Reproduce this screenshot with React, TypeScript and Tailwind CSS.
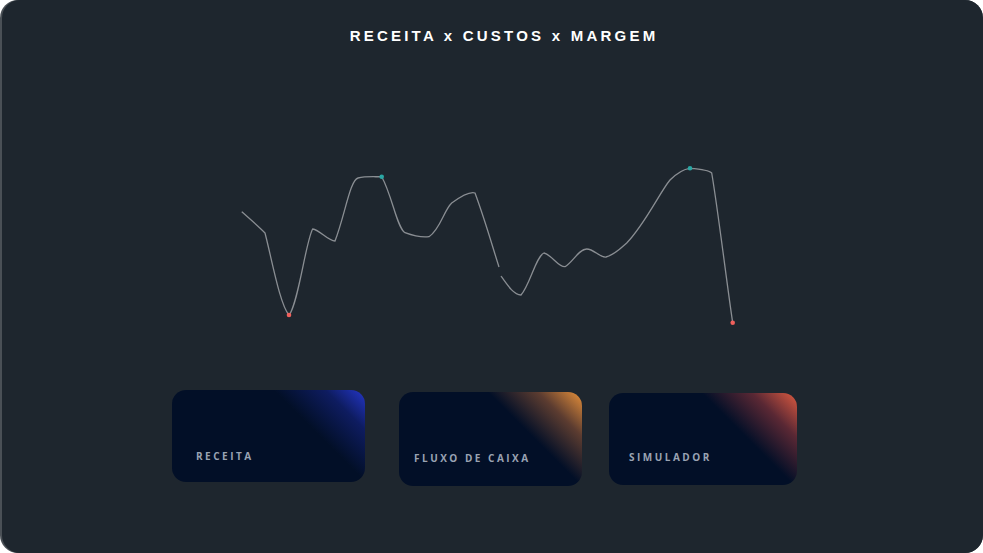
const pathA =
  "M241.7,211.7 C250,219 258,226 265,233 C272,260 280,305 289,315 C298,305 306,240 312.7,229 C320,230 328,241 335,241 C345,215 350,180 358,178 C366,176 376,177 381.7,176.7 C392,195 397,228 405,232.7 C414,236 423,237.5 429,236.7 C440,230 444,210 451.7,203 C460,197 469,191 475,193 C485,220 492,245 499,267";

const pathB =
  "M501,276 C508,286 514,295 521,295 C530,285 536,256 544,253 C552,255 558,267 565,266.7 C573,262 579,249 586.7,249 C594,249 600,258 606,257 C614,255 620,249 626.7,243 C645,224 660,192 670,180 C678,172 684,169 690,168.3 C700,169 709,170 711.7,173 C718,210 727,285 732.7,322.7";

const cards = [
  {
    label: "RECEITA",
    cls: "ml-[172px] mt-[0px] w-[193px] h-[92px] rounded-[14px] bg-[linear-gradient(225deg,#2436c8_0%,#0e1c60_14%,#020f27_32%)]",
    pad: "pl-6 pb-[21px]",
  },
  {
    label: "FLUXO DE CAIXA",
    cls: "ml-[34px] mt-[2px] w-[183px] h-[94px] rounded-[14px] bg-[linear-gradient(225deg,#e6903a_0%,#5c3c30_16%,#020f27_34%)]",
    pad: "pl-[15px] pb-[23px]",
  },
  {
    label: "SIMULADOR",
    cls: "ml-[27px] mt-[3px] w-[188px] h-[92px] rounded-[14px] bg-[linear-gradient(225deg,#dc5a40_0%,#5a2834_16%,#020f27_34%)]",
    pad: "pl-5 pb-[23px]",
  },
];

export default function App() {
  return (
    <div className="w-[983px] h-[553px] bg-white overflow-hidden">
      <div className="w-full h-full bg-[#4a5056] rounded-[18px] pl-[2px]">
        <div className="w-full h-full bg-[#1e262e] rounded-[18px] flex flex-col">
          <h1 className="pt-[27px] text-center text-white font-bold text-[15px] leading-[18px] tracking-[0.215em] font-['Liberation_Sans',sans-serif] pl-[23px]">
            RECEITA x CUSTOS x MARGEM
          </h1>
          <svg
            className="mt-[95px] -ml-[2px]"
            width="983"
            height="200"
            viewBox="0 140 983 200"
          >
            <path d={pathA} fill="none" stroke="#8a8e93" strokeWidth="1.3" />
            <path d={pathB} fill="none" stroke="#8a8e93" strokeWidth="1.3" />
            <circle cx="289" cy="315" r="2.3" fill="#f0605c" />
            <circle cx="732.7" cy="322.7" r="2.3" fill="#f0605c" />
            <circle cx="381.7" cy="176.7" r="2.3" fill="#2aa7a4" />
            <circle cx="690" cy="168.3" r="2.3" fill="#2aa7a4" />
          </svg>
          <div className="flex flex-row items-start mt-[50px] -ml-[2px]">
            {cards.map((c) => (
              <div key={c.label} className={`${c.cls} flex items-end ${c.pad}`}>
                <span className="text-[10px] leading-none font-bold tracking-[0.25em] text-[#9aa3b3] font-['Open_Sans',sans-serif]">
                  {c.label}
                </span>
              </div>
            ))}
          </div>
        </div>
      </div>
    </div>
  );
}
